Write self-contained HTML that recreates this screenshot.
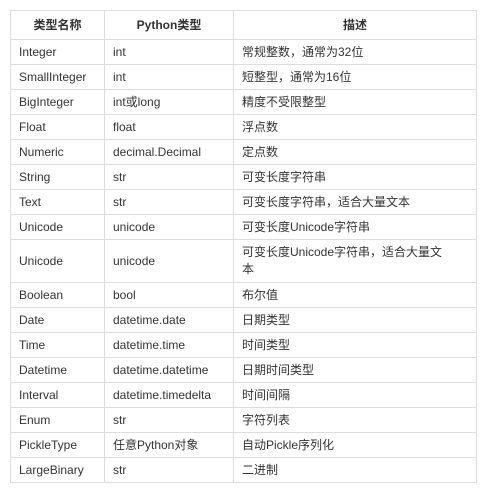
<!DOCTYPE html>
<html><head><meta charset="utf-8"><style>
body{margin:0;background:#fff;width:488px;height:494px;overflow:hidden}
table{position:absolute;left:10px;top:10px;border-collapse:collapse;width:467px;font-family:"Liberation Sans","Noto Sans CJK SC",sans-serif;font-size:12px;color:#333;table-layout:fixed}
td,th{border:1px solid #ddd;padding:0 8px;height:24px;line-height:17px;text-align:left;vertical-align:middle}
th{height:28px;text-align:center;font-weight:bold}
tr.d td{height:42px}
</style></head><body>
<table>
<colgroup><col style="width:94px"><col style="width:129px"><col></colgroup>
<tr><th>类型名称</th><th>Python类型</th><th>描述</th></tr>
<tr><td>Integer</td><td>int</td><td>常规整数，通常为32位</td></tr>
<tr><td>SmallInteger</td><td>int</td><td>短整型，通常为16位</td></tr>
<tr><td>BigInteger</td><td>int或long</td><td>精度不受限整型</td></tr>
<tr><td>Float</td><td>float</td><td>浮点数</td></tr>
<tr><td>Numeric</td><td>decimal.Decimal</td><td>定点数</td></tr>
<tr><td>String</td><td>str</td><td>可变长度字符串</td></tr>
<tr><td>Text</td><td>str</td><td>可变长度字符串，适合大量文本</td></tr>
<tr><td>Unicode</td><td>unicode</td><td>可变长度Unicode字符串</td></tr>
<tr class="d"><td>Unicode</td><td>unicode</td><td>可变长度Unicode字符串，适合大量文<br>本</td></tr>
<tr><td>Boolean</td><td>bool</td><td>布尔值</td></tr>
<tr><td>Date</td><td>datetime.date</td><td>日期类型</td></tr>
<tr><td>Time</td><td>datetime.time</td><td>时间类型</td></tr>
<tr><td>Datetime</td><td>datetime.datetime</td><td>日期时间类型</td></tr>
<tr><td>Interval</td><td>datetime.timedelta</td><td>时间间隔</td></tr>
<tr><td>Enum</td><td>str</td><td>字符列表</td></tr>
<tr><td>PickleType</td><td>任意Python对象</td><td>自动Pickle序列化</td></tr>
<tr><td>LargeBinary</td><td>str</td><td>二进制</td></tr>
</table>
</body></html>
